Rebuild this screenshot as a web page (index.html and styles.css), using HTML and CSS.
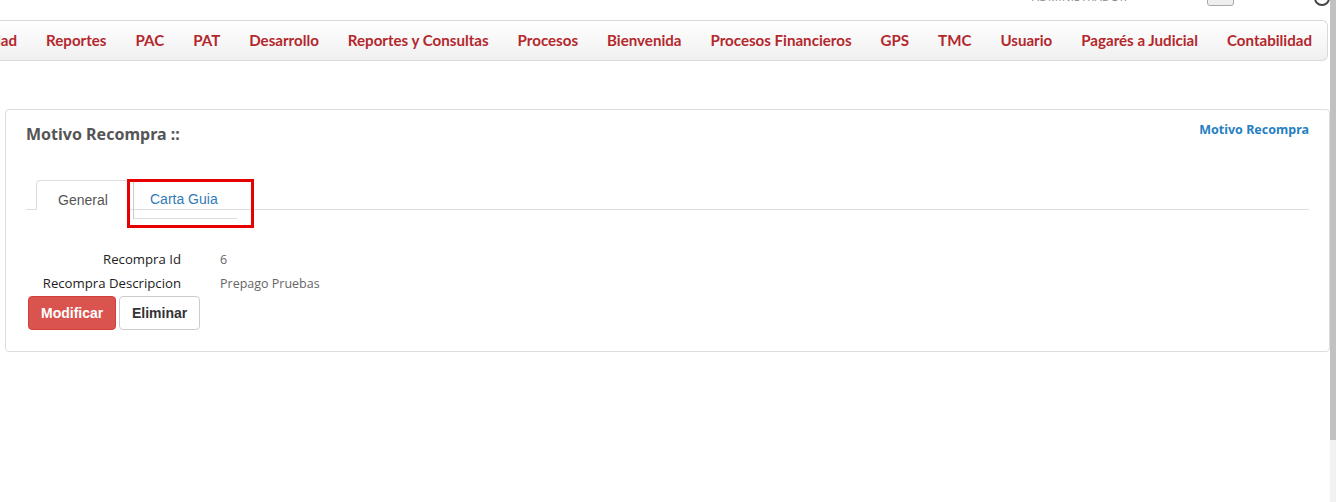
FILE: index.html
```html
<!DOCTYPE html>
<html lang="es">
<head>
<meta charset="utf-8">
<title>Motivo Recompra</title>
<link rel="stylesheet" href="styles.css">
</head>
<body>
<div class="page">
  <div class="topstrip">
    <div class="topinner">
      <span class="user">ADMINISTRADOR</span>
      <span class="topbtn">1</span>
      <span class="topicon"></span>
    </div>
  </div>
  <div class="navwrap">
    <nav class="navbar">
      <a>Calidad</a>
      <a>Reportes</a>
      <a>PAC</a>
      <a>PAT</a>
      <a>Desarrollo</a>
      <a>Reportes y Consultas</a>
      <a>Procesos</a>
      <a>Bienvenida</a>
      <a>Procesos Financieros</a>
      <a>GPS</a>
      <a>TMC</a>
      <a>Usuario</a>
      <a>Pagarés a Judicial</a>
      <a>Contabilidad</a>
    </nav>
  </div>

  <section class="panel">
    <div class="panel-head">
      <h2 class="title">Motivo Recompra ::</h2>
      <a class="crumb">Motivo Recompra</a>
    </div>
    <div class="tabs">
      <div class="tab active">General</div>
      <div class="tab link">Carta Guia</div>
      <div class="highlight"></div>
    </div>
    <div class="fields">
      <div class="label">Recompra Id</div><div class="value">6</div>
      <div class="label">Recompra Descripcion</div><div class="value">Prepago Pruebas</div>
    </div>
    <div class="actions">
      <button class="btn danger">Modificar</button>
      <button class="btn default">Eliminar</button>
    </div>
  </section>
</div>
<div class="scrollbar"><div class="thumb"></div></div>
</body>
</html>
```
FILE: styles.css
```css
html, body { margin: 0; padding: 0; background: #fff; }
body { font-family: "Open Sans", "Liberation Sans", sans-serif; color: #333; overflow: hidden; }
.page { width: 1330px; height: 502px; }

.topstrip { height: 20px; overflow: hidden; position: relative; }
.topinner { display: flex; align-items: flex-end; height: 20px; margin-top: -14px; padding-left: 1032px; }
.user { font-size: 11px; color: #888; letter-spacing: 0.5px; line-height: 18px; }
.topbtn { margin-left: 80px; width: 26px; height: 16px; border: 1px solid #aaa; border-radius: 3px; background: #eee; font-size: 10px; text-align: center; }
.topicon { margin-left: 80px; width: 12px; height: 12px; border-radius: 50%; border: 2px solid #444; }

.navwrap { width: 1328px; overflow: hidden; }
.navbar {
  display: flex; justify-content: flex-end; height: 39px; align-items: center;
  border: 1px solid #d9d9d9; border-radius: 0 6px 6px 0; border-left: none;
  background: linear-gradient(#ffffff, #f0f0f0);
}
.navbar a {
  flex: none; padding: 0 14.5px; color: #b3282d; font-family: "Lato", "Noto Sans", sans-serif;
  font-weight: 700; font-size: 15.1px; white-space: nowrap; margin-top: -2px;
}
.navbar a:last-child { padding-right: 15px; }

.panel {
  margin: 48px 0 0 5px; width: 1325px; height: 243px; border: 1px solid #ddd; border-radius: 4px;
  padding: 0 20px 0 20px; box-sizing: border-box; position: relative;
}
.panel-head { display: flex; justify-content: space-between; align-items: flex-start; height: 70px; }
.title { margin: 13px 0 0 0; font-family: "Noto Sans", "Open Sans", sans-serif; font-size: 16px; font-weight: 700; color: #555; }
.crumb { margin-top: 11px; font-family: "Noto Sans", sans-serif; font-size: 12.5px; font-weight: 700; color: #2680c2; }

.tabs { display: flex; border-bottom: 1px solid #ddd; height: 29px; padding-left: 10px; position: relative; }
.tab { font-family: "Liberation Sans", Arial, sans-serif; font-size: 14px; box-sizing: border-box; }
.tab.active { color: #555; background: #fff; border: 1px solid #ddd; border-bottom-color: #fff; border-radius: 4px 4px 0 0; height: 30px; width: 94px; text-align: center; line-height: 38px; }
.tab.link { color: #337ab7; padding: 0 0 0 16px; line-height: 36px; width: 104px; margin-left: 3px; height: 38px; border-bottom: 1px solid #ddd; border-left: 1px solid #ccc; position: relative; top: 1px; }
.highlight { position: absolute; left: 101px; top: -1px; width: 121px; height: 43px; border: 3px solid #e60000; }

.fields { display: grid; grid-template-columns: 155px auto; column-gap: 39px; row-gap: 5px; margin-top: 40px; font-size: 12.5px; line-height: 19px; }
.label { text-align: right; color: #222; font-size: 13.2px; }
.value { color: #666; }

.actions { display: flex; gap: 3px; margin-top: 3px; padding-left: 2px; }
.btn { font-family: "Liberation Sans", Arial, sans-serif; font-weight: 700; font-size: 14px; height: 34px; border-radius: 4px; padding: 0 12px; }
.btn.danger { background: #d9534f; border: 1px solid #d43f3a; color: #fff; width: 88px; }
.btn.default { background: #fff; border: 1px solid #ccc; color: #333; width: 81px; }

.scrollbar { position: fixed; right: 0; top: 0; width: 6px; height: 502px; background: #f1f1f1; }
.thumb { height: 440px; background: #c1c1c1; }
```
